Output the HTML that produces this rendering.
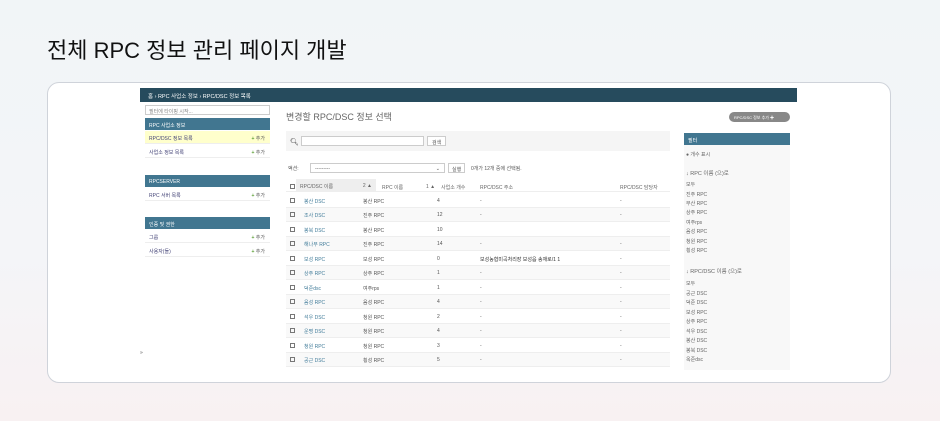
<!DOCTYPE html>
<html><head><meta charset="utf-8"><style>
*{margin:0;padding:0;box-sizing:border-box}
body{width:940px;height:421px;overflow:hidden;background:linear-gradient(180deg,#f1f5f7 0%,#f4f5f8 60%,#f8f1f2 100%);font-family:"Liberation Sans","Noto Sans CJK KR",sans-serif;position:relative}
.a{position:absolute;white-space:nowrap}
h1{position:absolute;left:47px;top:33px;font-size:22px;font-weight:400;color:#111;font-family:"Liberation Sans","Noto Sans CJK KR",sans-serif}
.card{position:absolute;left:47px;top:82px;width:844px;height:301px;background:#fff;border:1px solid #cfd3da;border-radius:12px}
.s{position:absolute;left:140px;top:88px;width:657px;height:282px;background:#fff;overflow:hidden;font-size:5px;color:#555}
.bar{position:absolute;left:0;top:0;width:657px;height:14px;background:#264b5d;color:#fff;font-size:5.5px;padding:4px 8px}
.hd{position:absolute;left:5px;width:125px;height:12px;background:#417690;color:#fff;font-size:5px;padding:3.5px 4px}
.r{position:absolute;left:5px;width:125px;height:13px;border-bottom:1px solid #eee;font-size:5px;padding:4px 4px;color:#447}
.r b{position:absolute;right:5px;top:4px;font-weight:400;color:#555}
.r b:before{content:"+ ";color:#5a9e33;font-weight:bold}
.tr{position:absolute;left:146px;width:384px;height:14.5px;border-bottom:1px solid #eee;font-size:5px}
.tr span{position:absolute;top:4.5px}
.cb{left:4px;width:5px;height:5px;border:1px solid #777;top:4.5px!important}
.lk{color:#447e9b}
.f{position:absolute;left:546px;font-size:5px;color:#666}
</style></head><body>
<h1>전체 RPC 정보 관리 페이지 개발</h1>
<div class="card"></div>
<div class="s">
<div class="bar">홈 › RPC 사업소 정보 › RPC/DSC 정보 목록</div>
<div class="a" style="left:5px;top:17px;width:125px;height:10px;border:1px solid #ccc;font-size:5px;padding:2px 3px;color:#888">필터에 타이핑 시작...</div>
<div class="hd" style="top:30px">RPC 사업소 정보</div>
<div class="r" style="top:43px;background:#ffffcc">RPC/DSC 정보 목록<b>추가</b></div>
<div class="r" style="top:57px">사업소 정보 목록<b>추가</b></div>
<div class="hd" style="top:87px">RPCSERVER</div>
<div class="r" style="top:100px">RPC 서버 목록<b>추가</b></div>
<div class="hd" style="top:129px">인증 및 권한</div>
<div class="r" style="top:142px">그룹<b>추가</b></div>
<div class="r" style="top:156px">사용자(들)<b>추가</b></div>
<div class="a" style="left:0;top:262px;font-size:5px">»</div>
<div class="a" style="left:146px;top:22px;font-size:9px;color:#666">변경할 RPC/DSC 정보 선택</div>
<div class="a" style="left:589px;top:24px;width:61px;height:10px;border-radius:5px;background:#888;color:#fff;font-size:4px;padding:3px 5px">RPC/DSC 정보 추가 ✚</div>
<div class="a" style="left:146px;top:43px;width:384px;height:20px;background:#f5f5f5"></div>
<div class="a" style="left:150px;top:50px;font-size:7px;color:#333">&#x1F50D;&#xFE0E;</div>
<div class="a" style="left:161px;top:48px;width:123px;height:10px;border:1px solid #ccc;background:#fff"></div>
<div class="a" style="left:287px;top:48px;width:19px;height:10px;border:1px solid #ccc;background:#fff;font-size:5px;padding:2px 4px">검색</div>
<div class="a" style="left:148px;top:77px;font-size:5px">액션:</div>
<div class="a" style="left:170px;top:75px;width:135px;height:10px;border:1px solid #ccc;font-size:5px;padding:2px 4px">---------<span style="float:right">⌄</span></div>
<div class="a" style="left:308px;top:75px;width:17px;height:10px;border:1px solid #ccc;font-size:5px;padding:2px 3px">실행</div>
<div class="a" style="left:331px;top:77px;font-size:5px">0개가 12개 중에 선택됨.</div>
<div class="tr" style="top:91px;height:13px;color:#666"><span class="cb"></span><span style="left:10px;width:80px;top:0;height:12px;background:#eee;padding:4px 4px">RPC/DSC 이름 <i style="float:right;font-style:normal">2 ▲</i></span><span style="left:96px">RPC 이름</span><span style="left:140px">1 ▲</span><span style="left:155px">사업소 개수</span><span style="left:194px">RPC/DSC 주소</span><span style="left:334px">RPC/DSC 담당자</span></div>
<div class="tr" style="top:105px"><span class="cb"></span><span class="lk" style="left:18px">봉산 DSC</span><span style="left:77px">봉산 RPC</span><span style="left:151px">4</span><span style="left:194px">-</span><span style="left:334px">-</span></div>
<div class="tr" style="top:119.5px;background:#f9f9f9"><span class="cb"></span><span class="lk" style="left:18px">조사 DSC</span><span style="left:77px">진주 RPC</span><span style="left:151px">12</span><span style="left:194px">-</span><span style="left:334px">-</span></div>
<div class="tr" style="top:134px"><span class="cb"></span><span class="lk" style="left:18px">봉북 DSC</span><span style="left:77px">봉산 RPC</span><span style="left:151px">10</span></div>
<div class="tr" style="top:148.5px;background:#f9f9f9"><span class="cb"></span><span class="lk" style="left:18px">해나무 RPC</span><span style="left:77px">진주 RPC</span><span style="left:151px">14</span><span style="left:194px">-</span><span style="left:334px">-</span></div>
<div class="tr" style="top:163px"><span class="cb"></span><span class="lk" style="left:18px">보성 RPC</span><span style="left:77px">보성 RPC</span><span style="left:151px">0</span><span style="left:194px;color:#333">보성농협미곡처리장 보성읍 송재로&#x2F;1 1</span><span style="left:334px">-</span></div>
<div class="tr" style="top:177.5px;background:#f9f9f9"><span class="cb"></span><span class="lk" style="left:18px">상주 RPC</span><span style="left:77px">상주 RPC</span><span style="left:151px">1</span><span style="left:194px">-</span><span style="left:334px">-</span></div>
<div class="tr" style="top:192px"><span class="cb"></span><span class="lk" style="left:18px">덕준dsc</span><span style="left:77px">여주rps</span><span style="left:151px">1</span><span style="left:194px">-</span><span style="left:334px">-</span></div>
<div class="tr" style="top:206.5px;background:#f9f9f9"><span class="cb"></span><span class="lk" style="left:18px">음성 RPC</span><span style="left:77px">음성 RPC</span><span style="left:151px">4</span><span style="left:194px">-</span><span style="left:334px">-</span></div>
<div class="tr" style="top:221px"><span class="cb"></span><span class="lk" style="left:18px">석우 DSC</span><span style="left:77px">청원 RPC</span><span style="left:151px">2</span><span style="left:194px">-</span><span style="left:334px">-</span></div>
<div class="tr" style="top:235.5px;background:#f9f9f9"><span class="cb"></span><span class="lk" style="left:18px">운명 DSC</span><span style="left:77px">청원 RPC</span><span style="left:151px">4</span><span style="left:194px">-</span><span style="left:334px">-</span></div>
<div class="tr" style="top:250px"><span class="cb"></span><span class="lk" style="left:18px">청원 RPC</span><span style="left:77px">청원 RPC</span><span style="left:151px">3</span><span style="left:194px">-</span><span style="left:334px">-</span></div>
<div class="tr" style="top:264.5px;background:#f9f9f9"><span class="cb"></span><span class="lk" style="left:18px">공근 DSC</span><span style="left:77px">횡성 RPC</span><span style="left:151px">5</span><span style="left:194px">-</span><span style="left:334px">-</span></div>
<div class="a" style="left:544px;top:45px;width:106px;height:240px;background:#f8f8f8"></div>
<div class="a" style="left:544px;top:45px;width:106px;height:12px;background:#417690;color:#fff;font-size:5px;padding:3.5px 4px">필터</div>
<div class="f" style="top:63px">● 개수 표시</div>
<div class="f" style="top:81px;font-size:5.5px">↓ RPC 이름 (으)로</div>
<div class="f lk" style="top:93px">모두</div>
<div class="f" style="top:103px">진주 RPC</div>
<div class="f" style="top:112px">부산 RPC</div>
<div class="f" style="top:121px">상주 RPC</div>
<div class="f" style="top:131px">여주rps</div>
<div class="f" style="top:140px">음성 RPC</div>
<div class="f" style="top:150px">청원 RPC</div>
<div class="f" style="top:159px">횡성 RPC</div>
<div class="f" style="top:179px;font-size:5.5px">↓ RPC/DSC 이름 (으)로</div>
<div class="f lk" style="top:192px">모두</div>
<div class="f" style="top:202px">공근 DSC</div>
<div class="f" style="top:211px">덕준 DSC</div>
<div class="f" style="top:221px">보성 RPC</div>
<div class="f" style="top:230px">상주 RPC</div>
<div class="f" style="top:240px">석우 DSC</div>
<div class="f" style="top:249px">봉산 DSC</div>
<div class="f" style="top:259px">봉북 DSC</div>
<div class="f" style="top:268px">옥준dsc</div>
</div>
</body></html>
